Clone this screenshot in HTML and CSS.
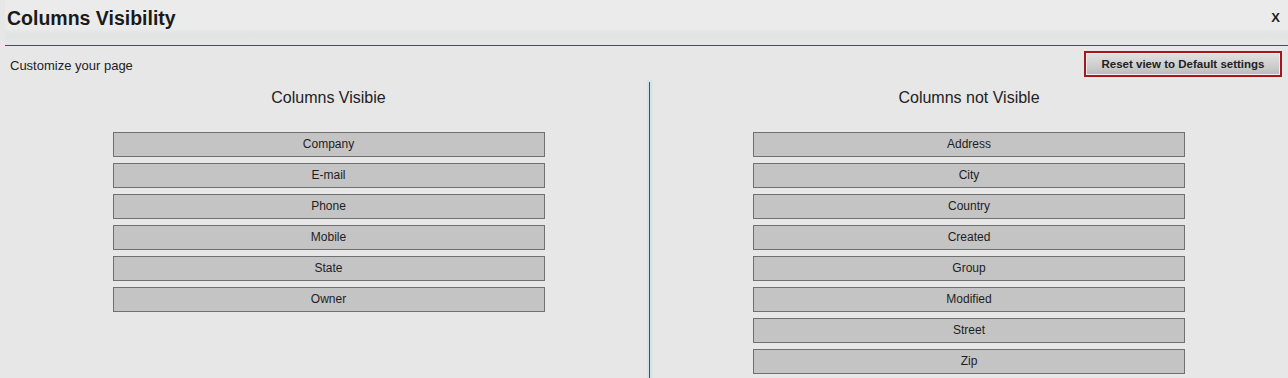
FILE: index.html
```html
<!DOCTYPE html>
<html lang="en">

<head>
  <meta charset="UTF-8">
  <meta name="viewport" content="width=device-width, initial-scale=1.0">
  <link rel="stylesheet" href="styles.css">
  <title>Columns Visibility</title>
</head>

<body>
  <div class="header">
    <h1>Columns Visibility</h1>
    <div class="close">X</div>
  </div>
  <div class="toolbar">
    <div class="hint">Customize your page</div>
    <button class="reset">Reset view to Default settings</button>
  </div>
  <div class="columns">
    <div class="col">
      <h2>Columns Visibie</h2>
      <div class="list">
        <div class="item">Company</div>
        <div class="item">E-mail</div>
        <div class="item">Phone</div>
        <div class="item">Mobile</div>
        <div class="item">State</div>
        <div class="item">Owner</div>
      </div>
    </div>
    <div class="divider"></div>
    <div class="col">
      <h2>Columns not Visible</h2>
      <div class="list">
        <div class="item">Address</div>
        <div class="item">City</div>
        <div class="item">Country</div>
        <div class="item">Created</div>
        <div class="item">Group</div>
        <div class="item">Modified</div>
        <div class="item">Street</div>
        <div class="item">Zip</div>
      </div>
    </div>
  </div>
</body>

</html>
```

FILE: styles.css
```css
:root {
  --item-width: 432px;
  --line-color: #2e5c65;
}

html {
  height: 100%;
}

body {
  height: 100%;
  margin: 0;
  overflow: hidden;
  background-color: #e7e7e7;
  font-family: "Liberation Sans", Arial, sans-serif;
  color: #1e1e1e;
}

.header {
  margin-left: 5px;
  height: 46px;
  padding: 0 8px 0 2px;
  box-sizing: border-box;
  display: flex;
  justify-content: space-between;
  align-items: flex-start;
  border-bottom: 1px solid var(--line-color);
  background: linear-gradient(to bottom, #ebebeb 0, #ebebeb 64%, #e0e5e4 74%, #e3e8e7 100%);
}

.header h1 {
  margin: 6px 0 0;
  font-size: 19.5px;
  font-weight: bold;
  line-height: 24px;
  color: #1a1a1a;
}

.header .close {
  margin-top: 10px;
  font-size: 13px;
  font-weight: bold;
  line-height: 16px;
}

.toolbar {
  display: flex;
  justify-content: space-between;
  align-items: center;
  padding: 5px 6px 0 10px;
}

.toolbar .hint {
  font-size: 13px;
  padding-top: 3px;
  color: #222;
}

.reset {
  width: 198px;
  height: 26px;
  padding: 0;
  border: 2px solid #a7161d;
  background: linear-gradient(to bottom, #e2e2e2, #c9c9c9 70%, #b9b9b9);
  box-shadow: inset 0 0 0 1px #efefef;
  font-family: "Liberation Sans", Arial, sans-serif;
  font-size: 11.5px;
  font-weight: bold;
  color: #222;
}

.columns {
  margin-top: 5px;
  padding-left: 8px;
  display: grid;
  grid-template-columns: 641px 1px 1fr;
  height: 300px;
}

.col {
  display: flex;
  flex-direction: column;
  align-items: center;
  padding-top: 6px;
}

.col h2 {
  margin: 0 0 24px;
  font-size: 16px;
  font-weight: normal;
  line-height: 20px;
  color: #222;
}

.divider {
  background-color: var(--line-color);
  box-shadow: 0 0 2px 2px #d2e2e5;
}

.list {
  display: flex;
  flex-direction: column;
  gap: 6px;
}

.item {
  width: var(--item-width);
  height: 25px;
  box-sizing: border-box;
  border: 1px solid #707070;
  background-color: #c4c4c4;
  text-align: center;
  font-size: 12px;
  line-height: 22px;
  color: #1e1e1e;
}
```
